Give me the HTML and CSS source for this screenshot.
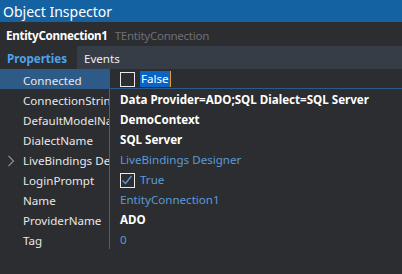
FILE: index.html
```html
<!DOCTYPE html>
<html lang="en">
<head>
  <meta charset="UTF-8">
  <title>Object Inspector</title>
  <link rel="stylesheet" href="styles.css">
</head>
<body>

  <div class="titlebar">Object Inspector</div>

  <div class="component-bar">
    <span class="component-name">EntityConnection1</span>
    <span class="component-type">TEntityConnection</span>
  </div>

  <div class="tabs">
    <div class="tab active">Properties</div>
    <div class="tab">Events</div>
  </div>

  <div class="grid">
    <div class="row selected">
      <div class="name">Connected</div>
      <div class="value editing">
        <span class="check"></span>
        <span class="highlight">False</span>
      </div>
    </div>
    <div class="row">
      <div class="name">ConnectionString</div>
      <div class="value bold">Data Provider=ADO;SQL Dialect=SQL Server</div>
    </div>
    <div class="row">
      <div class="name">DefaultModelName</div>
      <div class="value bold">DemoContext</div>
    </div>
    <div class="row">
      <div class="name">DialectName</div>
      <div class="value bold">SQL Server</div>
    </div>
    <div class="row">
      <div class="name"><span class="expander">
        <svg width="8" height="12" viewBox="0 0 8 12"><path d="M1.5 1 L6.5 6 L1.5 11" fill="none" stroke="#8a8c90" stroke-width="1.2"/></svg>
      </span>LiveBindings Designer</div>
      <div class="value link">LiveBindings Designer</div>
    </div>
    <div class="row">
      <div class="name">LoginPrompt</div>
      <div class="value link">
        <span class="check">
          <svg width="14" height="14" viewBox="0 0 14 14"><path d="M2.5 7.5 L5.5 10.5 L11.5 3" fill="none" stroke="#5b9bd8" stroke-width="1.3"/></svg>
        </span>
        True
      </div>
    </div>
    <div class="row">
      <div class="name">Name</div>
      <div class="value link">EntityConnection1</div>
    </div>
    <div class="row">
      <div class="name">ProviderName</div>
      <div class="value bold">ADO</div>
    </div>
    <div class="row">
      <div class="name">Tag</div>
      <div class="value link">0</div>
    </div>
  </div>

</body>
</html>
```

FILE: styles.css
```css
body {
  margin: 0;
  width: 402px;
  height: 274px;
  background-color: #2b2d31;
  font-family: "Noto Sans", "Open Sans", sans-serif;
  font-size: 11.6px;
  color: #e8e8e8;
  overflow: hidden;
}
.titlebar {
  height: 22px;
  line-height: 24px;
  padding-left: 3px;
  background-color: #1562a3;
  color: #ffffff;
  font-size: 14px;
  box-sizing: border-box;
}
.component-bar {
  height: 24px;
  display: flex;
  align-items: center;
  padding: 2px 0 0 6px;
  box-sizing: border-box;
  background-color: #2b2d31;
  letter-spacing: -0.3px;
}
.component-name {
  font-weight: bold;
  color: #ffffff;
  margin-right: 7px;
}
.component-type {
  color: #6e7074;
}
.tabs {
  height: 23px;
  display: flex;
  background-color: #363d46;
}
.tab {
  padding: 0 7px;
  line-height: 25px;
  color: #f0f0f0;
}
.tab.active {
  background-color: #2b2d31;
  color: #4ea3ef;
  font-weight: bold;
  width: 63px;
}
.row {
  display: flex;
  height: 20px;
}
.name,
.value {
  height: 20px;
  line-height: 20px;
  padding-top: 2px;
  box-sizing: border-box;
  white-space: nowrap;
}
.name {
  width: 110px;
  padding-left: 23px;
  border-right: 1px solid #5a5c60;
  overflow: hidden;
  position: relative;
}
.row.selected .name {
  background-color: #2e5a88;
  border-right-color: #2e5a88;
}
.expander {
  position: absolute;
  left: 7px;
  top: 6px;
  line-height: 0;
}
.value {
  flex: 1;
  padding-left: 10px;
  display: flex;
  align-items: center;
}
.value.editing {
  border-left: 1px solid #2e5a88;
  border-bottom: 1px solid #2e5a88;
  margin-left: -1px;
  padding-top: 1px;
}
.bold {
  font-weight: bold;
  color: #ffffff;
}
.link {
  color: #5b9bd8;
}
.check {
  width: 13px;
  height: 13px;
  border: 1px solid #e8e8e8;
  margin-right: 5px;
  line-height: 0;
}
.check svg {
  margin: -1px 0 0 -1px;
}
.highlight {
  background-color: #0a64c8;
  color: #ffffff;
  padding: 0 1px;
  line-height: 16px;
  border-right: 1px solid #e0a030;
}
```
